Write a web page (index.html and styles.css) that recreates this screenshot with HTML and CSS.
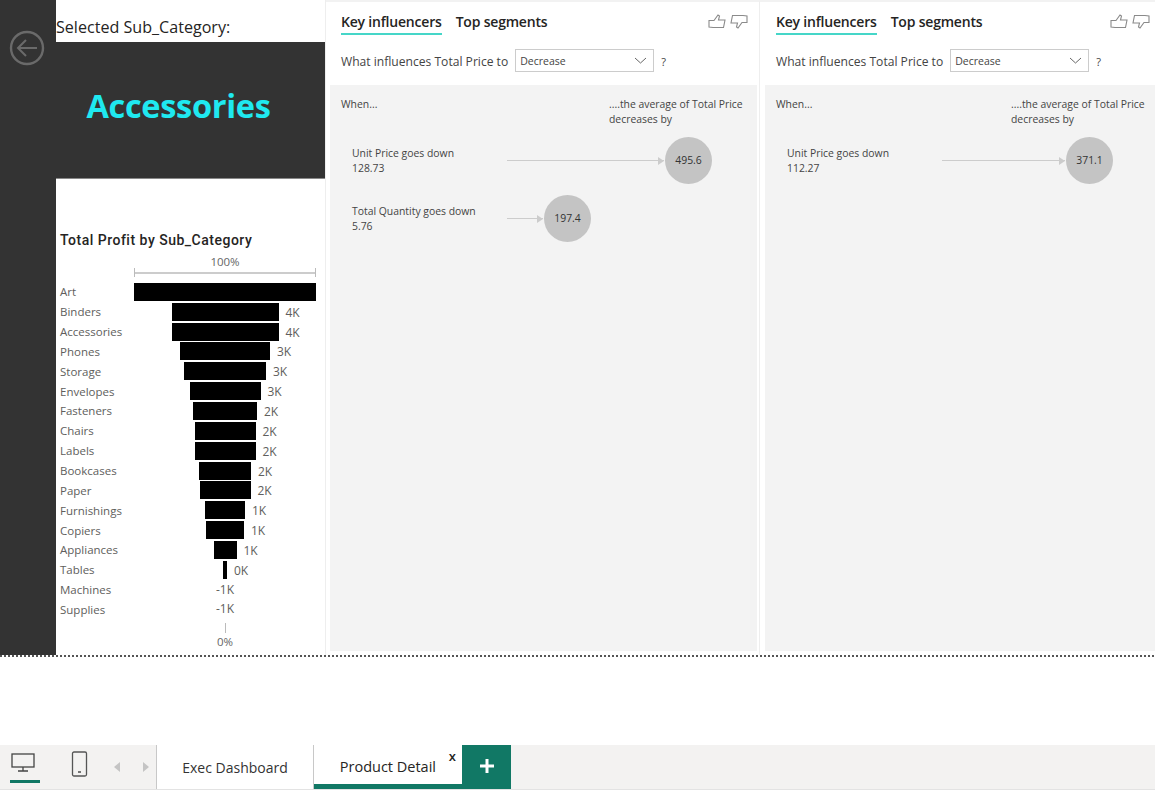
FILE: index.html
```html
<!DOCTYPE html>
<html lang="en">
<head>
    <meta charset="UTF-8">
    <meta name="viewport" content="width=device-width, initial-scale=1.0">
    <title>Product Detail</title>
    <link rel="stylesheet" href="styles.css">
</head>
<body>
    <div class="report">
        <div class="rail">
            <svg class="back-icon" width="36" height="36" viewBox="0 0 36 36" fill="none" stroke="#6a6a6a" stroke-width="2.4">
                <circle cx="18" cy="18" r="16"/>
                <path d="M28 18H9M17 10l-8 8 8 8" stroke-width="2"/>
            </svg>
        </div>
        <div class="left-col">
            <div class="selected-label">Selected Sub_Category:</div>
            <div class="selected-card">Accessories</div>
            <div class="chart">
                <div class="chart-title">Total Profit by Sub_Category</div>
                <div class="axis-top">100%</div>
                <div class="axis-bracket"></div>
                <div class="funnel">
                    <div class="row"><span class="cat">Art</span><div class="plot"><div class="bar" style="width:182px"></div></div></div>
                    <div class="row"><span class="cat">Binders</span><div class="plot"><div class="bar" style="width:107px"><span class="val">4K</span></div></div></div>
                    <div class="row"><span class="cat">Accessories</span><div class="plot"><div class="bar" style="width:107px"><span class="val">4K</span></div></div></div>
                    <div class="row"><span class="cat">Phones</span><div class="plot"><div class="bar" style="width:90px"><span class="val">3K</span></div></div></div>
                    <div class="row"><span class="cat">Storage</span><div class="plot"><div class="bar" style="width:82px"><span class="val">3K</span></div></div></div>
                    <div class="row"><span class="cat">Envelopes</span><div class="plot"><div class="bar" style="width:71px"><span class="val">3K</span></div></div></div>
                    <div class="row"><span class="cat">Fasteners</span><div class="plot"><div class="bar" style="width:64px"><span class="val">2K</span></div></div></div>
                    <div class="row"><span class="cat">Chairs</span><div class="plot"><div class="bar" style="width:61px"><span class="val">2K</span></div></div></div>
                    <div class="row"><span class="cat">Labels</span><div class="plot"><div class="bar" style="width:61px"><span class="val">2K</span></div></div></div>
                    <div class="row"><span class="cat">Bookcases</span><div class="plot"><div class="bar" style="width:52px"><span class="val">2K</span></div></div></div>
                    <div class="row"><span class="cat">Paper</span><div class="plot"><div class="bar" style="width:51px"><span class="val">2K</span></div></div></div>
                    <div class="row"><span class="cat">Furnishings</span><div class="plot"><div class="bar" style="width:40px"><span class="val">1K</span></div></div></div>
                    <div class="row"><span class="cat">Copiers</span><div class="plot"><div class="bar" style="width:38px"><span class="val">1K</span></div></div></div>
                    <div class="row"><span class="cat">Appliances</span><div class="plot"><div class="bar" style="width:23px"><span class="val">1K</span></div></div></div>
                    <div class="row"><span class="cat">Tables</span><div class="plot"><div class="bar" style="width:4px"><span class="val">0K</span></div></div></div>
                    <div class="row"><span class="cat">Machines</span><div class="plot"><span class="val-neg">-1K</span></div></div>
                    <div class="row"><span class="cat">Supplies</span><div class="plot"><span class="val-neg">-1K</span></div></div>
                </div>
                <div class="axis-tick"></div>
                <div class="axis-bottom">0%</div>
            </div>
        </div>

        <div class="panel panel-a">
            <div class="panel-head">
                <div class="tabs">
                    <span class="tab active">Key influencers</span>
                    <span class="tab">Top segments</span>
                </div>
                <div class="thumbs">
                    <svg width="18" height="15" viewBox="0 0 18 15" fill="none" stroke="#8a8a8a" stroke-width="1.1"><path d="M1 6.5h5L10 1l1.5 1-1 4H17l-1.5 7.5H5L1 13z"/></svg>
                    <svg width="18" height="15" viewBox="0 0 18 15" fill="none" stroke="#8a8a8a" stroke-width="1.1"><path d="M17 8.5h-5L8 14l-1.5-1 1-4H1l1.5-7.5H13L17 2z"/></svg>
                </div>
            </div>
            <div class="question">
                <span>What influences Total Price to</span>
                <div class="select">Decrease
                    <svg width="13" height="7" viewBox="0 0 13 7" fill="none" stroke="#666" stroke-width="1"><path d="M1 1l5.5 5L12 1"/></svg>
                </div>
                <span class="qmark">?</span>
            </div>
            <div class="inf-body">
                <div class="inf-head">
                    <span>When...</span>
                    <span class="inf-head-right">....the average of Total Price decreases by</span>
                </div>
                <div class="inf-row">
                    <div class="inf-label">Unit Price goes down<br>128.73</div>
                    <div class="line" style="width:157px"></div>
                    <div class="circle">495.6</div>
                </div>
                <div class="inf-row">
                    <div class="inf-label">Total Quantity goes down<br>5.76</div>
                    <div class="line" style="width:36px"></div>
                    <div class="circle">197.4</div>
                </div>
            </div>
        </div>

        <div class="panel panel-b">
            <div class="panel-head">
                <div class="tabs">
                    <span class="tab active">Key influencers</span>
                    <span class="tab">Top segments</span>
                </div>
                <div class="thumbs">
                    <svg width="18" height="15" viewBox="0 0 18 15" fill="none" stroke="#8a8a8a" stroke-width="1.1"><path d="M1 6.5h5L10 1l1.5 1-1 4H17l-1.5 7.5H5L1 13z"/></svg>
                    <svg width="18" height="15" viewBox="0 0 18 15" fill="none" stroke="#8a8a8a" stroke-width="1.1"><path d="M17 8.5h-5L8 14l-1.5-1 1-4H1l1.5-7.5H13L17 2z"/></svg>
                </div>
            </div>
            <div class="question">
                <span>What influences Total Price to</span>
                <div class="select">Decrease
                    <svg width="13" height="7" viewBox="0 0 13 7" fill="none" stroke="#666" stroke-width="1"><path d="M1 1l5.5 5L12 1"/></svg>
                </div>
                <span class="qmark">?</span>
            </div>
            <div class="inf-body">
                <div class="inf-head">
                    <span>When...</span>
                    <span class="inf-head-right">....the average of Total Price decreases by</span>
                </div>
                <div class="inf-row">
                    <div class="inf-label">Unit Price goes down<br>112.27</div>
                    <div class="line" style="width:123px"></div>
                    <div class="circle">371.1</div>
                </div>
            </div>
        </div>
    </div>
    <div class="dots"></div>
    <div class="gap"></div>

    <div class="tabbar">
        <div class="view-icons">
            <div class="view-btn on">
                <svg width="26" height="20" viewBox="0 0 26 20" fill="none" stroke="#444" stroke-width="1.3"><rect x="1" y="1" width="22" height="13"/><path d="M12 14v4M7 18h10"/></svg>
            </div>
            <svg class="phone" width="17" height="26" viewBox="0 0 17 26" fill="none" stroke="#555" stroke-width="1.3"><rect x="1.5" y="1" width="14" height="24" rx="1.5"/><path d="M7 21h3" stroke-width="1.6"/></svg>
            <svg class="arrow-l" width="7" height="10" viewBox="0 0 7 10" fill="#c4c4c4"><path d="M6 0v10L0 5z"/></svg>
            <svg class="arrow-r" width="7" height="10" viewBox="0 0 7 10" fill="#c4c4c4"><path d="M1 0v10l6-5z"/></svg>
        </div>
        <div class="page-tab">Exec Dashboard</div>
        <div class="page-tab current">Product Detail<span class="close">x</span></div>
        <div class="add-tab">
            <svg width="14" height="14" viewBox="0 0 14 14" fill="#fff"><path d="M5.5 0h3v5.5H14v3H8.500V14h-3V8.500H0v-3h5.500z"/></svg>
        </div>
    </div>
</body>
</html>
```

FILE: styles.css
```css
* {
    box-sizing: border-box;
}
body {
    margin: 0;
    width: 1155px;
    height: 792px;
    overflow: hidden;
    background: white;
    font-family: "Open Sans", "Noto Sans", sans-serif;
    color: #333;
}
.report {
    display: flex;
    height: 655px;
}
.rail {
    width: 56px;
    background-color: #333;
    padding: 30px 0 0 9px;
}
.back-icon {
    display: block;
}
.left-col {
    width: 270px;
    border-right: 1px solid #eee;
}
.selected-label {
    height: 42px;
    padding-top: 15px;
    font-size: 16.1px;
    line-height: 24px;
    color: #252423;
    white-space: nowrap;
}
.selected-card {
    height: 137px;
    background-color: #333;
    border-bottom: 1px solid #888;
    display: flex;
    align-items: center;
    justify-content: center;
    font-size: 32.5px;
    font-weight: 700;
    letter-spacing: -0.3px;
    color: #1fe9f0;
    padding: 0 24px 10px 0;
}
.chart {
    padding: 51px 0 0 4px;
}
.chart-title {
    font-family: Roboto, sans-serif;
    font-weight: 500;
    font-size: 14px;
    line-height: 20px;
    letter-spacing: 0.5px;
    color: #252423;
}
.axis-top, .axis-bottom {
    width: 182px;
    margin-left: 74px;
    text-align: center;
    font-size: 11.5px;
    line-height: 16px;
    color: #666;
}
.axis-top {
    margin-top: 4px;
}
.axis-bracket {
    width: 182px;
    height: 9px;
    margin: -2px 0 5px 74px;
    border-left: 1px solid #bbb;
    border-right: 1px solid #bbb;
    background: linear-gradient(#ccc, #ccc) center / 100% 2px no-repeat;
}
.row {
    display: flex;
    align-items: center;
    height: 19.85px;
}
.cat {
    width: 74px;
    flex: none;
    font-size: 11.5px;
    color: #605e5c;
    white-space: nowrap;
}
.plot {
    width: 182px;
    display: flex;
    justify-content: center;
}
.bar {
    position: relative;
    height: 18px;
    background: black;
}
.val {
    position: absolute;
    left: 100%;
    top: 1px;
    margin-left: 7px;
    font-size: 12px;
    line-height: 18px;
    color: #605e5c;
}
.val-neg {
    font-size: 12px;
    line-height: 18px;
    color: #605e5c;
}
.axis-tick {
    width: 1px;
    height: 10px;
    margin: 4px 0 0 165px;
    background: #bbb;
}
.axis-bottom {
    line-height: 14px;
    margin-top: 2px;
}

.panel {
    display: flex;
    flex-direction: column;
    border-top: 2px solid #f2f2f2;
}
.panel-a {
    width: 434px;
    padding: 0 2px 4px 4px;
    border-right: 1px solid #eee;
}
.panel-b {
    width: 395px;
    padding: 0 0 4px 5px;
}
.panel-head {
    display: flex;
    justify-content: space-between;
    height: 34px;
    padding: 9px 0 0 11px;
}
.panel-b .panel-head {
    padding-right: 5px;
}
.panel-a .panel-head {
    padding-right: 9px;
}
.tabs {
    display: flex;
    gap: 14px;
}
.tab {
    font-size: 14px;
    font-weight: 600;
    line-height: 22px;
    height: 24px;
    letter-spacing: -0.2px;
    color: #252423;
    white-space: nowrap;
}
.tab.active {
    border-bottom: 2px solid #45d6c8;
}
.thumbs {
    display: flex;
    gap: 4px;
    margin-top: 3px;
}
.question {
    display: flex;
    align-items: center;
    height: 49px;
    padding: 2px 0 0 11px;
    font-size: 12.1px;
    color: #444;
    white-space: nowrap;
}
.select {
    width: 139px;
    height: 23px;
    margin: 0 0 2px 7px;
    padding: 0 6px 0 4px;
    border: 1px solid #ccc;
    display: flex;
    align-items: center;
    justify-content: space-between;
    font-size: 10.5px;
}
.qmark {
    margin-left: 7px;
    font-size: 11px;
}
.inf-body {
    flex: 1;
    background-color: #f3f3f3;
    font-size: 10.4px;
    line-height: 15px;
    color: #444;
}
.inf-head {
    display: flex;
    justify-content: space-between;
    padding: 12px 11px 0 11px;
    height: 52px;
}
.inf-head-right {
    width: 137px;
}
.panel-b .inf-head {
    padding-right: 10px;
}
.panel-b .inf-head-right {
    width: 134px;
}
.inf-row {
    display: flex;
    align-items: center;
    height: 47px;
    margin-bottom: 11px;
    padding-left: 22px;
}
.inf-label {
    width: 155px;
    flex: none;
    white-space: nowrap;
}
.line {
    position: relative;
    height: 1px;
    background: #ccc;
}
.line::after {
    content: "";
    position: absolute;
    right: 0;
    top: -3.500px;
    border-left: 6px solid #ccc;
    border-top: 4px solid transparent;
    border-bottom: 4px solid transparent;
}
.circle {
    width: 47px;
    height: 47px;
    flex: none;
    margin-left: 1px;
    border-radius: 50%;
    background-color: #c4c4c4;
    display: flex;
    align-items: center;
    justify-content: center;
    color: #333;
}
.dots {
    height: 2px;
    background: repeating-linear-gradient(90deg, #555 0 2px, transparent 2px 4px);
}
.gap {
    height: 88px;
}
.tabbar {
    display: flex;
    height: 45px;
    background-color: #f3f2f1;
    border-bottom: 1px solid #e3e3e3;
}
.view-icons {
    position: relative;
    display: flex;
    align-items: flex-start;
    width: 157px;
    border-right: 1px solid #c8c8c8;
    padding-left: 10px;
}
.view-btn {
    width: 30px;
    height: 38px;
    padding: 8px 0 0 1px;
    border-bottom: 3px solid #117865;
}
.phone {
    margin: 6px 0 0 31px;
}
.arrow-l {
    margin: 17px 0 0 26px;
}
.arrow-r {
    margin: 17px 0 0 21px;
}
.page-tab {
    position: relative;
    width: 157px;
    background: white;
    border-right: 1px solid #c8c8c8;
    display: flex;
    align-items: center;
    justify-content: center;
    font-size: 14px;
    line-height: 20px;
    color: #333;
    padding-top: 2px;
}
.page-tab.current {
    width: 148px;
    border-right: none;
    border-bottom: 5px solid #117865;
    font-size: 14.5px;
    font-weight: 500;
    color: #252423;
    padding: 5px 26px 0 0;
    justify-content: flex-end;
}
.close {
    position: absolute;
    right: 6px;
    top: 2px;
    font-size: 13px;
    line-height: 18px;
    font-weight: 600;
    color: #252423;
}
.add-tab {
    width: 49px;
    background-color: #117865;
    display: flex;
    align-items: center;
    justify-content: center;
    padding-bottom: 3px;
}
```
